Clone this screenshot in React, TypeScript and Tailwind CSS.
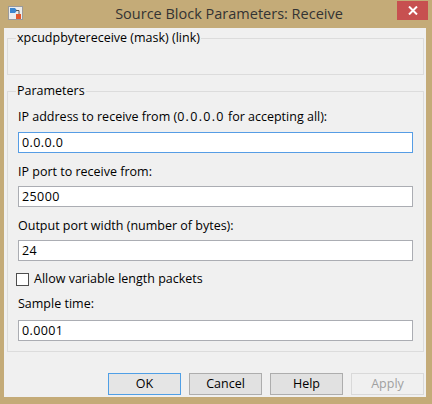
import React from "react";

const font = { fontFamily: '"Open Sans", "Noto Sans", Arial, sans-serif' };

function TitleIcon() {
  return (
    <svg width="16" height="15" viewBox="0 0 16 15">
      <rect x="0.5" y="0.5" width="14" height="13" fill="#ececec" stroke="#9a9a9a" />
      <path d="M2 2 L7 2 L9 4.5 L7 7 L2 7 Z" fill="#3b86cf" />
      <path d="M8 4.5 L11 4.5 L11 8" fill="none" stroke="#555" strokeWidth="1" />
      <rect x="8" y="8" width="5" height="5" fill="#e2582c" />
    </svg>
  );
}

function Field({ value, focused }: { value: string; focused?: boolean }) {
  return (
    <div
      className={
        "h-[21px] bg-white border flex items-center pl-[3px] text-[12.5px] leading-[16px] tracking-[0.4px] text-black " +
        (focused ? "border-[#569de5]" : "border-[#abadb3]")
      }
    >
      {value}
    </div>
  );
}

function Btn({ label, def, disabled }: { label: string; def?: boolean; disabled?: boolean }) {
  return (
    <div
      className={
        "w-[73px] h-[22px] flex items-center justify-center text-[12.5px] border " +
        (disabled
          ? "bg-[#f0f0f0] border-[#d9d9d9] text-[#a0a0a0]"
          : def
          ? "bg-[#e5e5e5] border-[#4f9fe6] text-black"
          : "bg-[#e1e1e1] border-[#adadad] text-black")
      }
    >
      {label}
    </div>
  );
}

export default function App() {
  return (
    <div className="w-[432px] h-[404px] bg-[#c4ab78] flex flex-col" style={font}>
      <div className="h-[28px] flex items-start shrink-0">
        <div className="ml-[8px] mt-[6px]">
          <TitleIcon />
        </div>
        <div className="flex-1 pl-[37px] pt-[4px] text-center text-[14.5px] leading-[20px] text-[#333333] whitespace-nowrap">
          Source Block Parameters: Receive
        </div>
        <div className="w-[31px] h-[19px] mt-[1px] mr-[4px] bg-[#c75050] flex items-center justify-center">
          <svg width="10" height="9" viewBox="0 0 10 9">
            <path d="M1 0.5 L9 8.5 M9 0.5 L1 8.5" stroke="#ffffff" strokeWidth="2" />
          </svg>
        </div>
      </div>

      <div className="flex-1 ml-[4px] mr-[6px] mb-[7px] bg-[#f0f0f0] flex flex-col pl-[3px] pr-[2px]">
        <fieldset className="mt-[2px] border border-[#dcdcdc] pl-[10px] pr-[10px]">
          <legend className="ml-[-2px] px-[1px] text-[12.5px] leading-[16px] text-black">
            xpcudpbytereceive (mask) (link)
          </legend>
          <div className="h-[28px]" />
        </fieldset>

        <fieldset className="mt-[8px] border border-[#dcdcdc] pl-[10px] pr-[10px] pb-[10px]">
          <legend className="ml-[-2px] px-[1px] text-[12.5px] leading-[16px] text-black">Parameters</legend>
          <div className="flex flex-col text-[12.5px] leading-[16px] text-black">
            <div className="mt-[10px]">
              IP address to receive from (<span className="tracking-[1.3px]">0.0.0.0</span> for accepting all):
            </div>
            <div className="mt-[7px]">
              <Field value="0.0.0.0" focused />
            </div>
            <div className="mt-[11px]">IP port to receive from:</div>
            <div className="mt-[6px]">
              <Field value="25000" />
            </div>
            <div className="mt-[11px]">Output port width (number of bytes):</div>
            <div className="mt-[6px]">
              <Field value="24" />
            </div>
            <div className="mt-[10px] h-[16px] flex items-center ml-[-2px]">
              <div className="w-[13px] h-[13px] border border-[#4d4d4d] bg-white" />
              <span className="ml-[5px]">Allow variable length packets</span>
            </div>
            <div className="mt-[9px]">Sample time:</div>
            <div className="mt-[8px]">
              <Field value="0.0001" />
            </div>
          </div>
        </fieldset>

        <div className="mt-[21px] flex justify-end gap-[8px]">
          <Btn label="OK" def />
          <Btn label="Cancel" />
          <Btn label="Help" />
          <Btn label="Apply" disabled />
        </div>
      </div>
    </div>
  );
}
